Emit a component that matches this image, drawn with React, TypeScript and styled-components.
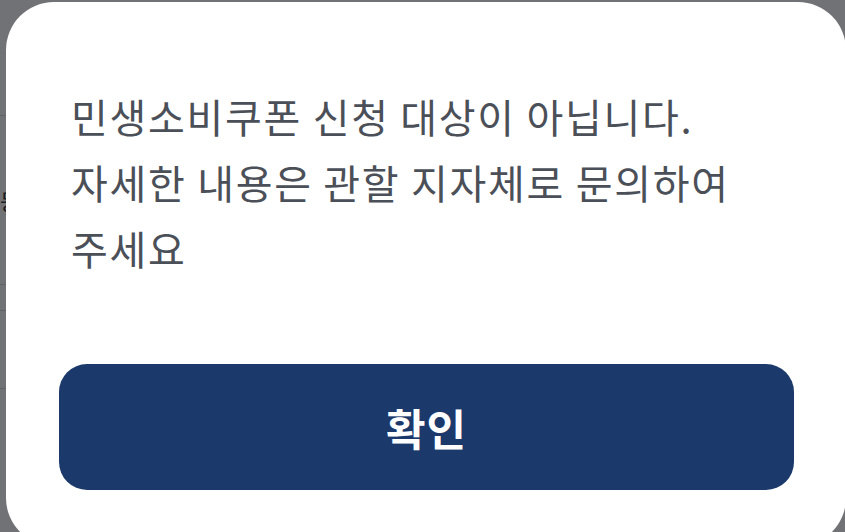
import styled, { createGlobalStyle } from "styled-components";

const Global = createGlobalStyle`
  html, body {
    margin: 0;
    padding: 0;
    height: 100%;
    overflow: hidden;
    background: #ffffff;
    font-family: "Noto Sans CJK KR", "Noto Sans", sans-serif;
  }
`;

const Page = styled.div`
  display: flex;
  flex-direction: column;
  padding-top: 115px;
`;

const Row = styled.div<{ $h: number }>`
  height: ${(p) => p.$h}px;
  border-top: 1px solid #d4d6da;
  display: flex;
  align-items: center;
  font-size: 22px;
  color: #222;
`;

const Overlay = styled.div`
  position: fixed;
  inset: 0;
  background: rgba(26, 28, 32, 0.62);
  display: flex;
  align-items: flex-start;
  padding: 2px 0 0 6px;
`;

const Modal = styled.div`
  width: 840px;
  height: 544px;
  flex-shrink: 0;
  box-sizing: border-box;
  background: #ffffff;
  border-radius: 48px;
  padding: 81px 52px 0 53px;
  display: flex;
  flex-direction: column;
`;

const Message = styled.p`
  margin: 0;
  padding-left: 12px;
  font-size: 40px;
  line-height: 66px;
  color: #4b5058;
  letter-spacing: 1.7px;
`;

const Confirm = styled.button`
  margin-top: 83px;
  height: 126px;
  border: none;
  border-radius: 28px;
  background: #1b396b;
  color: #ffffff;
  font-family: "Noto Sans CJK KR", "Noto Sans", sans-serif;
  font-size: 43px;
  font-weight: 700;
  letter-spacing: 1px;
  cursor: pointer;
`;

export default function App() {
  return (
    <>
      <Global />
      <Page>
        <Row $h={168}>등</Row>
        <Row $h={25} />
        <Row $h={77} />
        <Row $h={120} />
      </Page>
      <Overlay>
        <Modal>
          <Message>
            민생소비쿠폰 신청 대상이 아닙니다.
            <br />
            자세한 내용은 관할 지자체로 문의하여
            <br />
            주세요
          </Message>
          <Confirm>확인</Confirm>
        </Modal>
      </Overlay>
    </>
  );
}
